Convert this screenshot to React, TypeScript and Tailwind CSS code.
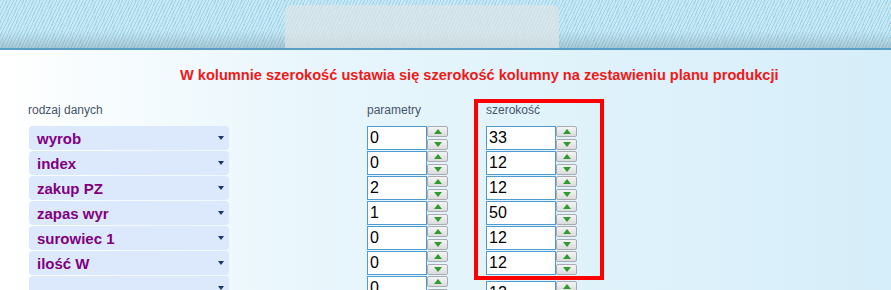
const rows = [
  { name: "wyrob", param: "0", width: "33" },
  { name: "index", param: "0", width: "12" },
  { name: "zakup PZ", param: "2", width: "12" },
  { name: "zapas wyr", param: "1", width: "50" },
  { name: "surowiec 1", param: "0", width: "12" },
  { name: "ilość W", param: "0", width: "12" },
  { name: "", param: "0", width: "12" },
]

function SpinBtn({ up }: { up?: boolean }) {
  return (
    <div className="h-[11px] w-full flex items-center justify-center rounded-[2px] border border-[#a8acb0] bg-[linear-gradient(to_bottom,#f4f4f4,#dcdcdc)]">
      <svg width="8" height="5" viewBox="0 0 8 5">
        {up ? (
          <polygon points="0,5 8,5 4,0" fill="#2f9a2f" />
        ) : (
          <polygon points="0,0 8,0 4,5" fill="#2f9a2f" />
        )}
      </svg>
    </div>
  )
}

function NumInput({ value, w }: { value: string; w: string }) {
  return (
    <div className="flex h-[24px] mb-[1px]">
      <div
        className={`${w} h-[24px] border border-[#4d9bcf] bg-white pl-[2px] text-[16px] leading-[22px] text-black font-['Liberation_Sans',sans-serif]`}
      >
        {value}
      </div>
      <div className="w-[21px] flex flex-col gap-[2px]">
        <SpinBtn up />
        <SpinBtn />
      </div>
    </div>
  )
}

function Select({ name }: { name: string }) {
  return (
    <div className="h-[24px] mb-[1px] w-[200px] rounded-[4px] bg-[#dce8fb] flex items-center justify-between pl-[8px] pr-[5px]">
      <span className="text-[15px] font-bold text-[#800080] font-['Liberation_Sans',sans-serif] leading-none">
        {name}
      </span>
      <svg width="6" height="4" viewBox="0 0 6 4">
        <polygon points="0,0 6,0 3,4" fill="#17386b" />
      </svg>
    </div>
  )
}

export default function App() {
  return (
    <div className="w-[891px] h-[290px] overflow-hidden bg-[linear-gradient(to_right,#ffffff,#e8f6fc_35%,#d6eef9)]">
      <header className="relative h-[50px] border-b-2 border-[#5a9ec6] bg-[repeating-linear-gradient(115deg,#a2d5ea_0px,#a2d5ea_1px,#c6e8f4_1px,#c6e8f4_3px)]">
        <div className="absolute inset-0 bg-[linear-gradient(to_bottom,transparent_65%,rgba(110,140,150,0.35))]" />
        <div className="absolute left-[285px] top-[5px] w-[274px] h-[43px] rounded-t-[7px] bg-[rgba(222,228,230,0.72)]" />
      </header>

      <div className="pt-[16px] pl-[180px] h-[49px] text-[14.6px] leading-[18px] font-bold text-[#f01818] font-['Liberation_Sans',sans-serif]">
        W kolumnie szerokość ustawia się szerokość kolumny na zestawieniu planu produkcji
      </div>

      <div className="flex font-['Liberation_Sans',sans-serif] text-[12px] text-[#46546a]">
        <div className="ml-[29px] pt-[4px]">
          <div className="h-[23px] leading-[14px] -ml-[1px]">rodzaj danych</div>
          {rows.map((r, i) => (
            <Select key={i} name={r.name} />
          ))}
        </div>

        <div className="ml-[138px] pt-[4px]">
          <div className="h-[23px] leading-[14px]">parametry</div>
          {rows.map((r, i) => (
            <NumInput key={i} value={r.param} w="w-[60px]" />
          ))}
        </div>

        <div className="ml-[26px]">
          <div className="w-[130px] border-4 border-[#ff0000] pl-[8px]">
            <div className="h-[23px] leading-[14px]">szerokość</div>
            {rows.slice(0, 6).map((r, i) => (
              <NumInput key={i} value={r.width} w="w-[70px]" />
            ))}
          </div>
          <div className="pl-[12px] pt-[1px]">
            <NumInput value={rows[6].width} w="w-[70px]" />
          </div>
        </div>
      </div>
    </div>
  )
}
